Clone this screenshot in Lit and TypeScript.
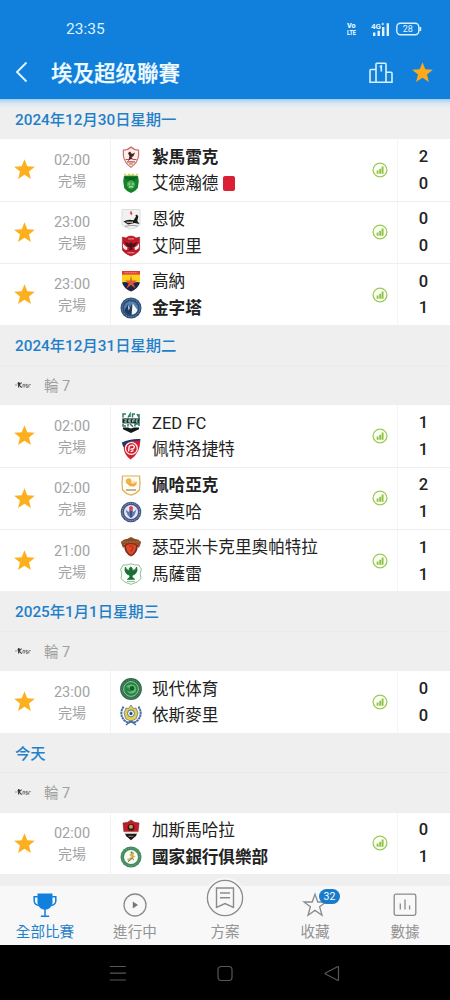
import { LitElement, html, svg, css } from "lit";
import { customElement, property } from "lit/decorators.js";
import { classMap } from "lit/directives/class-map.js";

const STAR = "M12 1.2 L14.9 8.6 L22.8 9.1 L16.7 14.1 L18.7 21.8 L12 17.5 L5.3 21.8 L7.3 14.1 L1.2 9.1 L9.1 8.6 Z";

const crests: Record<string, unknown> = {
  zamalek: svg`<path d="M3.4 4 Q8 4 11 1 Q14 4 18.6 4 L18.6 10 Q17.5 17 11 21.2 Q4.5 17 3.4 10 Z" fill="#fdeeeb" stroke="#c9716a" stroke-width="1.2"/>
    <path d="M8 7 L10 5.5 L12 8 L15 6.5 L13.5 10 L11.5 11.5 L14 14 L11 13 L8 15 L9.5 10.5 Z" fill="#4c2523"/>
    <path d="M5.5 13.5 H9 M13 13.5 H16.5 M7 15.8 H15 M9 18 H13" stroke="#b9514a" stroke-width="1.2"/>`,
  ittihad: svg`<path d="M4 1 L7 3.5 L9 1.5 L11 3 L13 1.5 L15 3.5 L18 1 L17 6 H5 Z" fill="#b5cf5a"/>
    <path d="M4 4 H18 L18.8 9 L17.8 16 Q15 20 11 21 Q7 20 4.2 16 L3.2 9 Z" fill="#16802b"/>
    <path d="M5 6 H17 M7 9 Q11 6.5 15 9" stroke="#0b5d1b" stroke-width="1.4" fill="none"/>
    <circle cx="11" cy="12.5" r="4.2" fill="#43ad4e"/><path d="M8.5 12 H10 M12 12 H13.5 M9 15.2 Q11 13.8 13 15.2" stroke="#c9ecc5" stroke-width="1" fill="none"/>`,
  enppi: svg`<path d="M2 1.5 H20 V17 Q16 20.5 11 21 Q6 20.5 2 17 Z" fill="#f1f1f0" stroke="#d6d6d6" stroke-width=".8"/>
    <path d="M11 2.5 L12.4 5.6 L11.3 7.4 L9.9 5 Z" fill="#d7474a"/>
    <path d="M3.5 13.4 Q8 10.8 13.5 12.2 L16 8.4 L15.3 7.4 L17 6.5 L18.3 8.5 L17.3 13 L19.5 16 L14.5 15 L8 16.4 Z" fill="#191919"/>
    <path d="M6.5 14.2 H13" stroke="#eee" stroke-width="1"/><path d="M5 18.4 Q11 16.5 18 18" stroke="#9c9c9c" fill="none"/>`,
  ahly: svg`<path d="M2.4 2 L6 3 Q8 1 11 1 Q14 1 16 3 L19.6 2 V15 Q17 19 11 21 Q5 19 2.4 15 Z" fill="#c21929" stroke="#8e1b22" stroke-width=".6"/>
    <path d="M3 8.5 Q5 11.5 7.5 12.5 L7 15 Q3.5 14.5 3 12 Z M19 8.5 Q17 11.5 14.5 12.5 L15 15 Q18.5 14.5 19 12 Z" fill="#f5eeee"/>
    <path d="M4.5 6.8 L9 8.7 L11 7.2 L13 8.7 L17.5 6.8 L14.6 11.4 L12.2 12.2 L13 15.6 L11 14.4 L9 15.6 L9.8 12.2 L7.4 11.4 Z" fill="#461519"/>
    <path d="M8 3.9 H14 M7.5 17.8 H14.5" stroke="#ef9b9b" stroke-width="1"/>`,
  gouna: svg`<path d="M2 1 H20 V11 Q19 18 11 21.6 Q3 18 2 11 Z" fill="#f9d21c"/>
    <path d="M2 12.5 Q6 11 11 14 Q16 11 20 12.5 Q18.4 18.4 11 21.6 Q3.6 18.4 2 12.5 Z" fill="#1c2350"/>
    <path d="M2 1 H20 V4.6 H2 Z" fill="#df3a34"/><path d="M4.5 2.8 H17.5" stroke="#f0a094" stroke-width="1.1" stroke-dasharray="1.4 .6"/>
    <path d="M11 5.5 L12 10.6 L17 10.6 L13.2 13.2 L15.6 18.4 L11 15 L6.4 18.4 L8.8 13.2 L5 10.6 L10 10.6 Z" fill="#e2562d"/>`,
  pyramids: svg`<circle cx="11" cy="11" r="10.5" fill="#2b4d75"/><circle cx="11" cy="11" r="8.9" fill="none" stroke="#8fa8c4" stroke-width=".8" stroke-dasharray="1 .8"/>
    <circle cx="11" cy="11.2" r="7" fill="#5380b0"/><path d="M4.4 13 L8 7.6 L10 10.5 L12.5 6 L17.6 13 Q16 18 11 18 Q6 18 4.4 13 Z" fill="#21395a"/>
    <path d="M12.5 6 L11.6 17.8 Q16.4 17 17.6 13 Z M8 8 L9.8 11 L8.6 13.5 Z" fill="#edf3f8"/>`,
  zed: svg`<path d="M3 5.5 V2 H6 M8 5.5 L10 2 V5 M12.5 5.5 V2 H15 M17 2 L19 5.5 V2 M3 12 V14 H6 M8 12 V14.6 M10 12 L13 14.6 M15 14.6 V12 H19 V14" stroke="#2b7d66" stroke-width="1.5" fill="none"/>
    <rect x="2.4" y="6.4" width="17.2" height="5" fill="#102c27"/>
    <path d="M4.3 7.8 H6.7 L4.5 10.1 H7 M11 7.8 H8.8 V10.1 H11 M8.8 9 H10.5 M12.7 10.4 V7.8 H15 M12.7 9 H14.5 M18.2 7.8 H16.3 V10.1 H18.2" stroke="#d6e8e2" stroke-width=".8" fill="none"/>
    <path d="M3 15.4 L8 15.4 L11 16.6 L14 15.4 L19 15.4 V17.3 L11 21 L3 17.3 Z" fill="#111b1b"/>`,
  petrojet: svg`<path d="M1.8 4.5 Q10 .4 20.4 1 L20 6 Q17 2.8 11 3.8 Q6 5 5.2 11.8 Q2.4 8 1.8 4.5 Z" fill="#1f396c"/>
    <path d="M20 2.6 Q20.8 15 10.5 21.6 Q4 16.4 3.8 10.5 Q5 4.4 11.5 3.4 Q17 2.8 20 2.6 Z" fill="#d2202e"/>
    <circle cx="11.4" cy="10.4" r="5.9" fill="none" stroke="#fff" stroke-width="1.2"/>
    <path d="M8.6 13.4 L9.2 8.2 Q13 5.8 14.4 8.6 Q14.4 11.4 10.4 11.2 M10.6 13.6 L13.4 12.6" stroke="#fff" stroke-width="1.3" fill="none"/>`,
  pharco: svg`<path d="M2.5 2 H19.5 Q20.5 9 19.5 16 Q16 20 11 21.2 Q6 20 2.5 16 Q1.5 9 2.5 2 Z" fill="#fffdf8" stroke="#dcae55" stroke-width="1.2"/>
    <circle cx="8.7" cy="7.2" r="2.9" fill="#f1b44b"/><path d="M6.8 9 Q10 14 15 12 Q17.5 9.5 16.5 7 Q14.5 10.5 11 9 Z" fill="#f3a744"/><circle cx="13.9" cy="8" r="1.6" fill="#f8dda4"/>
    <path d="M6 16 H16" stroke="#c9b185" stroke-width="2"/>`,
  smouha: svg`<circle cx="11" cy="11" r="10.3" fill="#465383"/><circle cx="11" cy="11" r="8.7" fill="none" stroke="#a9b2d0" stroke-width=".9" stroke-dasharray="1 .9"/>
    <circle cx="11" cy="11" r="7" fill="#dfe6f3"/><path d="M5.6 8.5 Q7 15 11 17 Q15 15 16.4 8.5 L13.4 11 L11 7 L8.6 11 Z" fill="#6378ad"/>
    <path d="M9 6.5 L11 4.8 L13 6.5 L12.4 10 H9.6 Z" fill="#d4455b"/><path d="M11 10 V16.5" stroke="#27365f" stroke-width="1.2"/>`,
  cleopatra: svg`<path d="M.8 6 Q4 2.5 7 3 L11 1 L15 3 Q18 2.5 21.2 6 L19 12 Q15 8 11 8 Q7 8 3 12 Z" fill="#8b4a26"/>
    <path d="M2.5 6 H19.5 M4 8.4 H18" stroke="#c98f45" stroke-width=".8" stroke-dasharray="1.4 .8"/>
    <path d="M4.2 9 Q11 5 17.8 9 Q18.2 17 11 20.6 Q3.8 17 4.2 9 Z" fill="#7b2d1e"/>
    <path d="M6 9.6 Q11 6.6 16 9.6 Q16.3 15.8 11 19 Q5.7 15.8 6 9.6 Z" fill="#e04a27"/><path d="M9.4 10.4 Q12.8 8.8 12.8 12 Q12 14.6 10.4 15.4" stroke="#b5301d" stroke-width="1.4" fill="none"/>`,
  masry: svg`<path d="M3 2 Q7 2.5 11 .8 Q15 2.5 19 2 Q20 4.5 21.3 6 Q19.5 11 21 15.5 Q18 20 11 21.3 Q4 20 1 15.5 Q2.5 11 .7 6 Q2 4.5 3 2 Z" fill="#fbfefb" stroke="#82b98c" stroke-width=".9"/>
    <path d="M5.4 4 Q4 8 6.7 10.7 Q8.5 12.2 9.7 12 L10 14 L7.4 16.3 H14.6 L12 14 L12.3 12 Q13.5 12.2 15.3 10.7 Q18 8 16.6 4 Q16 7.6 12.3 7.5 L12 5 L10.8 4 L9.3 5.3 L9.7 7.5 Q6 7.6 5.4 4 Z" fill="#176f35" stroke="#176f35" stroke-width=".9"/>
    <path d="M7 18.5 H15" stroke="#9cc3a4" stroke-width="1"/>`,
  modern: svg`<circle cx="11" cy="11" r="10.9" fill="#2f6747"/><circle cx="11" cy="11" r="9.2" fill="none" stroke="#6f9f81" stroke-width=".9" stroke-dasharray="1.1 1"/>
    <circle cx="11" cy="11" r="7.4" fill="#258448" stroke="#9fd0ac" stroke-width=".9"/>
    <path d="M5.7 9 Q9 5 14.5 7.2 Q18 11 14.5 14.8 Q9.5 17 6.8 13 Q10 14.8 12.5 12.5 Q8.5 12.5 8.6 9.5 Z" fill="#63bd72"/><circle cx="12" cy="10.4" r="2.4" fill="#155b31"/>`,
  ismaily: svg`<path d="M3.6 2.6 Q-1.4 10 4.6 16.6 Q8 19.5 11 17.5 Q14 19.5 17.4 16.6 Q23.4 10 18.4 2.6" fill="none" stroke="#4a6fa5" stroke-width="2" stroke-dasharray="2.4 .4"/>
    <path d="M6 4 L8.5 4.6 L11 1 L13.5 4.6 L16 4 L18 9 L16.4 14.5 L11 17.5 L5.6 14.5 L4 9 Z" fill="#e9d040" stroke="#4769a1" stroke-width=".7"/>
    <circle cx="11" cy="9.4" r="3.5" fill="#ecf1f4" stroke="#3d5f91" stroke-width=".8"/><path d="M11 7.6 L12.6 9 L12 10.9 H10 L9.4 9 Z" fill="#284b7e"/>
    <path d="M6 21 L11 17 L16 21" fill="none" stroke="#456b9f" stroke-width="1.5"/>`,
  gharby: svg`<path d="M3 4 Q8 4 11 1 Q14 4 19 4 L18 13 H4 Z" fill="#c01c27" stroke="#721c20" stroke-width=".6"/>
    <path d="M5 14.6 H17 L16 17 L11 21.3 L6 17 Z" fill="#191919"/><circle cx="11" cy="8.4" r="3.4" fill="#391b16"/><circle cx="11" cy="7.8" r="2" fill="#c59a55"/>
    <path d="M4 13.6 H18" stroke="#efe3da" stroke-width="1.8"/><path d="M8.5 17.3 H13.5" stroke="#a88d57" stroke-width=".9"/>`,
  nbe: svg`<circle cx="11" cy="11" r="10.5" fill="#438a5e"/><circle cx="11" cy="11" r="8.8" fill="none" stroke="#77ae8b" stroke-width=".8" stroke-dasharray="1 1"/>
    <circle cx="11" cy="11" r="7" fill="#fbfbf4"/><path d="M6.8 13 Q10 12.5 11.2 10.5 L9 8.7 L12 7.7 L14.5 5.5 L13.5 9.5 L15.7 10.5 L12.6 12 L9 15.6 Z" fill="#dfae4c"/>
    <circle cx="11.6" cy="6.7" r="1.1" fill="#438a5e"/><path d="M8 15.8 L12.5 12 L13.6 14.2" stroke="#438a5e" stroke-width="1" fill="none"/>`,
};

interface Team { name: string; crest: string; score: number; win?: boolean; red?: boolean }
interface Match { time: string; home: Team; away: Team }
interface Day { label: string; round?: string; matches: Match[] }

const t = (name: string, crest: string, score: number, win = false, red = false): Team => ({ name, crest, score, win, red });

const days: Day[] = [
  { label: "2024年12月30日星期一", matches: [
    { time: "02:00", home: t("紮馬雷克", "zamalek", 2, true), away: t("艾德瀚德", "ittihad", 0, false, true) },
    { time: "23:00", home: t("恩彼", "enppi", 0), away: t("艾阿里", "ahly", 0) },
    { time: "23:00", home: t("高納", "gouna", 0), away: t("金字塔", "pyramids", 1, true) },
  ] },
  { label: "2024年12月31日星期二", round: "輪 7", matches: [
    { time: "02:00", home: t("ZED FC", "zed", 1), away: t("佩特洛捷特", "petrojet", 1) },
    { time: "02:00", home: t("佩哈亞克", "pharco", 2, true), away: t("索莫哈", "smouha", 1) },
    { time: "21:00", home: t("瑟亞米卡克里奧帕特拉", "cleopatra", 1), away: t("馬薩雷", "masry", 1) },
  ] },
  { label: "2025年1月1日星期三", round: "輪 7", matches: [
    { time: "23:00", home: t("现代体育", "modern", 0), away: t("依斯麥里", "ismaily", 0) },
  ] },
  { label: "今天", round: "輪 7", matches: [
    { time: "02:00", home: t("加斯馬哈拉", "gharby", 0), away: t("國家銀行俱樂部", "nbe", 1, true) },
  ] },
];

@customElement("match-row")
export class MatchRow extends LitElement {
  @property({ attribute: false }) match!: Match;

  static styles = css`
    :host { display: grid; grid-template-columns: 111px 1fr 53px; height: 62.4px; box-sizing: border-box;
      border-top: 1px solid #eeeeee; background: #fff; }
    .when { display: grid; grid-template-columns: 48px 48px; align-items: center; border-right: 1px solid #f2f2f2; color: #a3a3a3; }
    .star { width: 23px; height: 23px; justify-self: center; fill: #fdb01e; }
    .time { display: flex; flex-direction: column; align-items: center; font-size: 14.5px; line-height: 21px; padding-top: 1.6px; }
    .status { font-size: 14px; }
    .middle { display: flex; align-items: center; justify-content: space-between; padding: 0 9px 0 9px; }
    .teams { display: flex; flex-direction: column; }
    .team { display: flex; align-items: center; height: 26.7px; font-size: 16.6px; color: #222; white-space: nowrap; }
    .name { line-height: 24px; padding-top: 2px; }
    .win { font-weight: 700; }
    .crest { width: 22px; height: 22px; margin-right: 10px; }
    .red { width: 12px; height: 15px; border-radius: 2px; background: #d91e36; margin-left: 5px; }
    .stats { width: 16px; height: 16px; }
    .scores { display: flex; flex-direction: column; justify-content: center; text-align: center; border-left: 1px solid #f5f5f5;
      font-size: 16.5px; font-weight: 500; line-height: 26.7px; color: #222; padding: 1.6px 1px 0 0; }
  `;

  private team(team: Team) {
    return html`<div class="team">
      <svg class="crest" viewBox="0 0 22 22">${crests[team.crest]}</svg>
      <span class=${classMap({ name: true, win: !!team.win })}>${team.name}</span>
      ${team.red ? html`<span class="red"></span>` : null}
    </div>`;
  }

  render() {
    const m = this.match;
    return html`
      <div class="when">
        <svg class="star" viewBox="0 0 24 24"><path d=${STAR}/></svg>
        <div class="time"><span>${m.time}</span><span class="status">完場</span></div>
      </div>
      <div class="middle">
        <div class="teams">${this.team(m.home)}${this.team(m.away)}</div>
        <svg class="stats" viewBox="0 0 16 16">
          <circle cx="8" cy="8" r="6.9" fill="#fbfff4" stroke="#9cca59" stroke-width="1.3"/>
          <path d="M5.6 11.8V8.4M8.2 11.8V6.8M10.6 11.8V4.4" stroke="#8fc244" stroke-width="1.9"/>
        </svg>
      </div>
      <div class="scores"><span>${m.home.score}</span><span>${m.away.score}</span></div>`;
  }
}

@customElement("app-root")
export class AppRoot extends LitElement {
  static styles = css`
    :host { display: flex; flex-direction: column; width: 450px; height: 1000px; overflow: hidden; background: #efefef;
      font-family: Roboto, "Noto Sans CJK TC", "Noto Sans CJK SC", sans-serif; }
    .head { flex: none; height: 99px; background: #1080dc; color: #f2fbff; }
    .status { display: flex; align-items: center; height: 44px; padding: 14px 28px 0 66px; box-sizing: border-box; }
    .clock { flex: 1; font-size: 15.5px; line-height: 20px; color: #dff1fc; }
    .volte { width: 11px; height: 14px; margin-right: 9px; overflow: visible; }
    .signal { width: 24px; height: 15px; margin-right: 6px; overflow: visible; }
    .battery { width: 26px; height: 14px; }
    .bar { display: flex; align-items: center; height: 55px; padding: 0 16px 0 14px; box-sizing: border-box; }
    .back { width: 16px; height: 24px; margin-right: 21px; }
    .title { flex: 1; font-size: 21.5px; font-weight: 500; line-height: 30px; padding-top: 5px; -webkit-text-stroke: .25px #f2fbff; }
    .podium { width: 26px; height: 22px; margin: 2px 17px 0 0; }
    .fav { width: 23px; height: 23px; margin-top: 2px; fill: #fea91a; }
    .list { flex: 1; min-height: 0; overflow: hidden; background: linear-gradient(#a3cbef, #d7e6f3 4px, #efefef 9px); }
    .date { height: 39.2px; line-height: 42px; padding-left: 15px; box-sizing: border-box; font-size: 15.3px; font-weight: 500; color: #1f80ca; }
    .date.split { height: 39.7px; line-height: 43px; }
    .round { display: flex; align-items: center; height: 39.2px; box-sizing: border-box; border-top: 1px solid #eaeaea; padding: 0 0 1px 15px; font-size: 14.5px; color: #a0a0a0; }
    .league { width: 16px; height: 8px; margin-right: 13px; }
    .tabs { flex: none; display: grid; grid-template-columns: repeat(5, 1fr); height: 59px; background: #f8f8f8; }
    .tab { display: flex; flex-direction: column; align-items: center; justify-content: flex-end; height: 59px; color: #929292; font-size: 14.6px; line-height: 20px; padding-bottom: 3px; box-sizing: border-box; }
    .tab svg { width: 26px; height: 26px; margin-bottom: 4px; fill: none; stroke: #8b8b8b; stroke-width: 1.3; overflow: visible; }
    .tab.on { color: #1f80ca; }
    .tab .plan { flex: none; width: 38px; height: 38px; margin-bottom: 5px; }
    .icon { position: relative; display: flex; }
    .badge { position: absolute; left: 17px; top: -3px; width: 21px; height: 15px; border-radius: 8px; background: #197bc9; color: #fff; font-size: 10.5px; line-height: 15px; text-align: center; }
    .system { flex: none; display: flex; justify-content: space-between; align-items: center; height: 55px; background: #000; padding: 0 109px; box-sizing: border-box; }
    .system svg { width: 18px; height: 18px; fill: none; stroke: #575757; stroke-width: 1.2; }
  `;

  private day(d: Day) {
    return html`
      <div class=${classMap({ date: true, split: !!d.round })}>${d.label}</div>
      ${d.round ? html`<div class="round">
        <svg class="league" viewBox="0 0 16 8">
          <path d="M0 4H2.4M14 3.6H16" stroke="#999"/>
          <path d="M3.6 1.4V6.6M6.6 1.6L4 4L6.8 6.6" stroke="#444" stroke-width="1.2" fill="none"/>
          <path d="M8 6.4V3.4H9.8V6.4M11 6.4H12.4V4.8H11V3.4H12.6M13.8 6.6V3.6" stroke="#777" fill="none"/>
          <circle cx="3.8" cy="2.4" r="1.2" fill="#333"/>
        </svg>
        <span>${d.round}</span></div>` : null}
      ${d.matches.map((m) => html`<match-row .match=${m}></match-row>`)}`;
  }

  render() {
    return html`
      <header class="head">
        <div class="status">
          <span class="clock">23:35</span>
          <svg class="volte" viewBox="0 0 11 14" font-size="7.6" font-weight="900" fill="#e4f5ff">
            <text x="1" y="6.2" textLength="8.6" lengthAdjust="spacingAndGlyphs">Vo</text>
            <text x="1" y="13" textLength="8.8" lengthAdjust="spacingAndGlyphs">LTE</text>
          </svg>
          <svg class="signal" viewBox="0 0 24 15">
            <text x="5" y="6.8" font-size="8" font-weight="700" fill="#e4f5ff">4G</text><path d="M15.6 2H18M16.8 .8V3.2" stroke="#e4f5ff" stroke-width=".9"/>
            <path d="M8.2 14V10.6M12.7 14V8.8M17.2 14V5M21.8 14V1.2" stroke="#e4f5ff" stroke-width="2.4"/>
          </svg>
          <svg class="battery" viewBox="0 0 26 14">
            <rect x=".8" y="1.3" width="22" height="11.4" rx="3.6" fill="none" stroke="#d8effc" stroke-width="1.4"/>
            <path d="M24.3 5V9" stroke="#d8effc" stroke-width="1.8"/><text x="11.8" y="10.2" font-size="9" text-anchor="middle" fill="#e4f5ff">28</text>
          </svg>
        </div>
        <div class="bar">
          <svg class="back" viewBox="0 0 16 24"><path d="M12.5 2.5L3 12L12.5 21.5" fill="none" stroke="#e4f5ff" stroke-width="1.9"/></svg>
          <span class="title">埃及超级聯賽</span>
          <svg class="podium" viewBox="0 0 26 22" fill="none" stroke="#d8effc" stroke-width="1.6">
            <path d="M8 7.5H3Q2 7.5 2 8.5V20.2H24V11.2Q24 10.2 23 10.2H18M8 20V2Q8 1.2 9 1.2H17Q18 1.2 18 2V20M11.8 5L13.3 4V9.5"/>
          </svg>
          <svg class="fav" viewBox="0 0 24 24"><path d=${STAR}/></svg>
        </div>
      </header>
      <main class="list">${days.map((d) => this.day(d))}</main>
      <nav class="tabs">
        <div class="tab on">
          <svg viewBox="0 0 26 26"><path d="M5.5 1.5H20.5V11Q19 17.5 13 17.8Q7 17.5 5.5 11Z" fill="#1080dc" stroke="none"/>
            <path d="M5.8 4.8H2.2V9Q2.5 12.8 6.8 13.5M20.2 4.8H23.8V9Q23.5 12.8 19.2 13.5M13 17V24M8.8 24.2H17.2" stroke="#1080dc" stroke-width="1.5"/></svg>
          <span>全部比賽</span>
        </div>
        <div class="tab">
          <svg viewBox="0 0 26 26"><circle cx="13" cy="13" r="11"/><path d="M10.8 9.5V16.5L16 13Z" fill="#777" stroke="none"/></svg>
          <span>進行中</span>
        </div>
        <div class="tab">
          <svg class="plan" viewBox="0 0 38 38"><circle cx="19" cy="19" r="20.5" fill="#f8f8f8" stroke="none"/><circle cx="19" cy="19" r="17.6"/>
            <path d="M10.5 9H27.5V28.5L19 24.5L10.5 28.5ZM14 14H24M14 18.8H24" stroke-width="1.4"/></svg>
          <span>方案</span>
        </div>
        <div class="tab">
          <span class="icon"><svg viewBox="0 0 26 26"><path d="M13 2.2L15.8 10H24L17.6 14.8L20 23.2L13 18.4L6 23.2L8.4 14.8L2 10H10.2Z"/></svg><span class="badge">32</span></span>
          <span>收藏</span>
        </div>
        <div class="tab">
          <svg viewBox="0 0 26 26"><rect x="2.2" y="2.2" width="21.6" height="21.2" rx="1.8"/><path d="M8.3 17.5V11.5M13 17.5V7.5M17.6 17.5V13.5"/></svg>
          <span>數據</span>
        </div>
      </nav>
      <footer class="system">
        <svg viewBox="0 0 18 18"><path d="M1 2.5H17M1 9.2H17M1 16H17"/></svg>
        <svg viewBox="0 0 18 18"><rect x="2" y="2.5" width="14" height="14" rx="3.2"/></svg>
        <svg viewBox="0 0 18 18"><path d="M15.5 3.2V15.8Q15.5 16.8 14.5 16.2L2.5 10Q1.5 9.5 2.5 9L14.5 2.7Q15.5 2.2 15.5 3.2Z"/></svg>
      </footer>`;
  }
}
